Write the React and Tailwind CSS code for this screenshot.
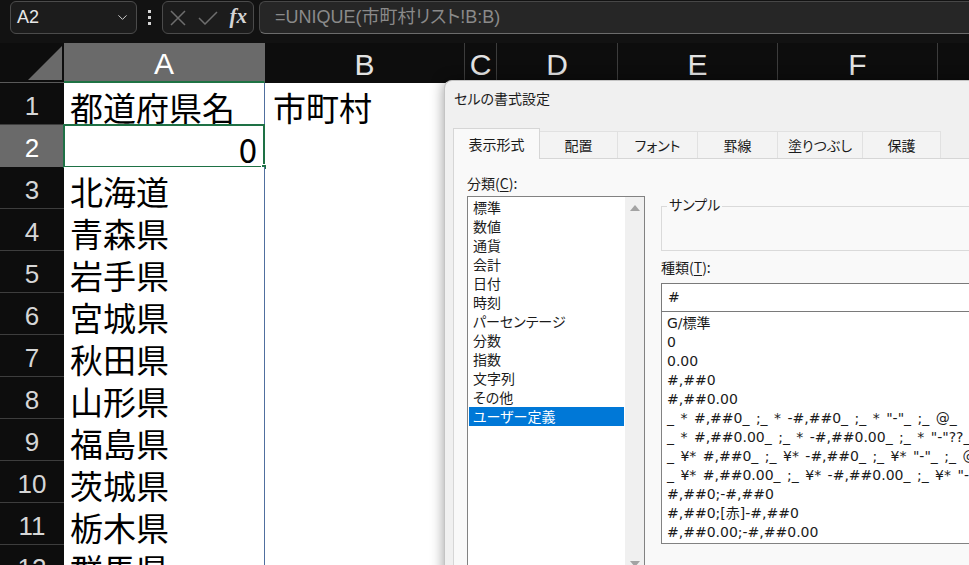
import React from 'react';
import { ChevronDown } from 'lucide-react';

// Column headers of the sheet (widths follow the grid lines in the shot)
const COLS = [
  { label: 'A', w: 'w-[201px]', active: true },
  { label: 'B', w: 'w-[200px]' },
  { label: 'C', w: 'w-[32px]' },
  { label: 'D', w: 'w-[121px]' },
  { label: 'E', w: 'w-[160px]' },
  { label: 'F', w: 'w-[160px]' },
];

const ROWS = [
  { n: 1, a: '都道府県名', b: '市町村' },
  { n: 2, a: '0', active: true },
  { n: 3, a: '北海道' },
  { n: 4, a: '青森県' },
  { n: 5, a: '岩手県' },
  { n: 6, a: '宮城県' },
  { n: 7, a: '秋田県' },
  { n: 8, a: '山形県' },
  { n: 9, a: '福島県' },
  { n: 10, a: '茨城県' },
  { n: 11, a: '栃木県' },
  { n: 12, a: '群馬県' },
];

const TABS = [
  { label: '表示形式', w: 'w-[87px]', active: true },
  { label: '配置', w: 'w-[78px]' },
  { label: 'フォント', w: 'w-[80px]' },
  { label: '罫線', w: 'w-[80px]' },
  { label: '塗りつぶし', w: 'w-[85px]' },
  { label: '保護', w: 'w-[78px]' },
];

const CATEGORIES = [
  '標準', '数値', '通貨', '会計', '日付', '時刻', 'パーセンテージ',
  '分数', '指数', '文字列', 'その他', 'ユーザー定義',
];

const FORMATS = [
  'G/標準',
  '0',
  '0.00',
  '#,##0',
  '#,##0.00',
  '_ * #,##0_ ;_ * -#,##0_ ;_ * "-"_ ;_ @_ ',
  '_ * #,##0.00_ ;_ * -#,##0.00_ ;_ * "-"??_ ;_ @_ ',
  '_ ¥* #,##0_ ;_ ¥* -#,##0_ ;_ ¥* "-"_ ;_ @_ ',
  '_ ¥* #,##0.00_ ;_ ¥* -#,##0.00_ ;_ ¥* "-"??_ ;_ @_ ',
  '#,##0;-#,##0',
  '#,##0;[赤]-#,##0',
  '#,##0.00;-#,##0.00',
];

const FormulaBar = () => (
  <div className="h-[43px] bg-[#121212] flex items-start pt-[1px] pl-[10px]">
    {/* Name box */}
    <div className="w-[127px] h-[33px] rounded-[6px] border border-[#4b4b4b] bg-[#1c1c1c] flex items-center justify-between pl-[6px] pr-[6px]">
      <span className="text-[18px] text-[#e8e8e8] font-['Liberation_Sans',sans-serif]">A2</span>
      <ChevronDown className="w-[15px] h-[15px] text-[#d0d0d0]" strokeWidth={1.6} />
    </div>
    {/* vertical dots */}
    <div className="w-[25px] h-[33px] flex flex-col items-center justify-center gap-[3px]">
      <span className="w-[3px] h-[3px] bg-[#d6d6d6]" />
      <span className="w-[3px] h-[3px] bg-[#d6d6d6]" />
      <span className="w-[3px] h-[3px] bg-[#d6d6d6]" />
    </div>
    {/* cancel / enter / fx */}
    <div className="w-[92px] h-[33px] rounded-[6px] border border-[#4b4b4b] bg-[#1c1c1c] flex items-center justify-between pl-[7px] pr-[6px]">
      <svg width="16" height="16" viewBox="0 0 16 16" className="text-[#6e6e6e]">
        <path d="M1 1L15 15M15 1L1 15" stroke="currentColor" strokeWidth="1.5" fill="none" />
      </svg>
      <svg width="20" height="14" viewBox="0 0 20 14" className="text-[#6e6e6e]">
        <path d="M1 7L7 13L19 1" stroke="currentColor" strokeWidth="1.5" fill="none" />
      </svg>
      <span className="text-[21px] leading-none italic font-bold text-[#d4d4d4] font-['Liberation_Serif',serif] pb-[2px]">fx</span>
    </div>
    {/* formula input */}
    <div className="ml-[5px] flex-1 h-[33px] rounded-l-[6px] border border-r-0 border-[#474747] border-b-[#6c6c6c] bg-[#262626] flex items-center pl-[15px]">
      <span className="text-[18px] text-[#8a8a8a] font-['Liberation_Sans','Noto_Sans_CJK_JP',sans-serif] [font-feature-settings:'palt']">
        =UNIQUE(市町村リスト!B:B)
      </span>
    </div>
  </div>
);

const HeaderRow = () => (
  <div className="h-[40px] flex bg-[#0d0d0d]">
    <div className="w-[64px] h-full border-b border-[#595959] flex items-end justify-end pr-[2px] pb-[2px]">
      <svg width="34" height="34" viewBox="0 0 34 34">
        <polygon points="0,34 34,34 34,0" fill="#6a6a6a" />
      </svg>
    </div>
    {COLS.map((c) => (
      <div
        key={c.label}
        className={`${c.w} h-full flex items-center justify-center pt-[4px] border-r text-[30px] leading-none font-['Liberation_Sans',sans-serif] ${
          c.active
            ? 'bg-[#6a6a6a] text-white border-[#6a6a6a] border-b-2 border-b-[#1f7244]'
            : 'text-[#e2e2e2] border-[#3c3c3c]'
        }`}
      >
        {c.label}
      </div>
    ))}
    <div className="flex-1" />
  </div>
);

const Sheet = () => (
  <div className="flex flex-col">
    {ROWS.map((r) => (
      <div key={r.n} className="h-[42px] flex shrink-0">
        <div
          className={`w-[64px] h-full border-b flex items-center justify-center pt-[5px] text-[26px] leading-none font-['Liberation_Sans',sans-serif] ${
            r.active ? 'bg-[#6a6a6a] text-white border-[#6a6a6a]' : 'bg-[#0d0d0d] text-[#d6d6d6] border-[#3d3d3d]'
          }`}
        >
          {r.n}
        </div>
        <div
          className={`relative w-[201px] h-full bg-white border-r border-[#506f9f] flex pt-[8px] text-[33px] leading-none text-black font-['Noto_Sans_CJK_JP',sans-serif] ${
            r.active ? 'justify-end pr-[7px]' : 'pl-[6px]'
          }`}
        >
          {r.a}
          {r.active && (
            <>
              <div className="absolute -top-[1px] -left-[1px] -right-[1px] -bottom-[1px] border-2 border-[#1e7145]" />
              <div className="absolute -right-[3px] -bottom-[3px] w-[6px] h-[6px] bg-[#1e7145] border border-white" />
            </>
          )}
        </div>
        <div className="flex-1 h-full bg-white pl-[8px] pt-[8px] text-[33px] leading-none text-black font-['Noto_Sans_CJK_JP',sans-serif]">
          {r.b}
        </div>
      </div>
    ))}
  </div>
);

const FormatDialog = () => (
  <div className="absolute left-[444px] top-[80px] w-[540px] h-[500px] bg-[#f0f0f0] rounded-tl-[8px] border-l border-t border-[#c4c4c4] shadow-[0_0_14px_rgba(0,0,0,0.4)] text-[#1b1b1b] font-['Noto_Sans_CJK_JP',sans-serif] [font-feature-settings:'palt']">
    <div className="h-[34px] pl-[9px] flex items-center text-[14px]">セルの書式設定</div>

    {/* Tabs */}
    <div className="ml-[8px] mt-[13px] h-[30px] flex items-end relative z-10">
      {TABS.map((t) =>
        t.active ? (
          <div
            key={t.label}
            className={`${t.w} h-[31px] -mb-[1px] bg-[#f9f9f9] border-l border-t border-r border-[#d6d6d6] flex items-center justify-center text-[14px]`}
          >
            {t.label}
          </div>
        ) : (
          <div
            key={t.label}
            className={`${t.w} h-[27px] bg-[#f3f3f3] border-t border-r border-[#e1e1e1] flex items-center justify-center text-[14px]`}
          >
            {t.label}
          </div>
        )
      )}
    </div>

    {/* Tab page */}
    <div className="ml-[8px] h-[420px] bg-[#f9f9f9] border border-[#d6d6d6] flex gap-[16px] pl-[13px] pt-[15px]">
      {/* Category */}
      <div className="w-[178px] shrink-0 flex flex-col">
        <div className="h-[20px] text-[14px] leading-[18px]">
          分類(<span className="underline underline-offset-2">C</span>):
        </div>
        <div className="mt-[2px] h-[380px] bg-white border border-[#828282] flex">
          <div className="flex-1 pt-[1px] pl-[1px] pr-[1px]">
            {CATEGORIES.map((c, i) => (
              <div
                key={c}
                className={`h-[19px] leading-[18px] pl-[4px] text-[14px] ${
                  i === CATEGORIES.length - 1 ? 'bg-[#0078d7] text-white' : ''
                }`}
              >
                {c}
              </div>
            ))}
          </div>
          <div className="w-[19px] bg-[#f0f0f0] flex flex-col items-center justify-between pt-[8px] pb-[8px]">
            <svg width="10" height="6" viewBox="0 0 10 6">
              <polygon points="0,6 10,6 5,0" fill="#a3a3a3" />
            </svg>
            <svg width="10" height="6" viewBox="0 0 10 6">
              <polygon points="0,0 10,0 5,6" fill="#a3a3a3" />
            </svg>
          </div>
        </div>
      </div>

      {/* Sample + types */}
      <div className="flex-1 min-w-0 flex flex-col">
        <div className="relative mt-[32px] h-[45px] border border-[#dadada]">
          <span className="absolute -top-[13px] left-[5px] px-[2px] bg-[#f9f9f9] text-[14px] leading-[20px]">サンプル</span>
        </div>
        <div className="mt-[8px] h-[19px] text-[14px] leading-[17px]">
          種類(<span className="underline underline-offset-2">T</span>):
        </div>
        <div className="mt-[5px] h-[29px] bg-white border border-[#7a7a7a] flex items-center pl-[6px] text-[14px] font-['DejaVu_Sans','Noto_Sans_CJK_JP',sans-serif]">
          #
        </div>
        <div className="h-[232px] bg-white border-l border-b border-[#828282] pt-[2px] pl-[5px] overflow-hidden text-[14px] [word-spacing:2px] font-['DejaVu_Sans','Noto_Sans_CJK_JP',sans-serif]">
          {FORMATS.map((f) => (
            <div key={f} className="h-[19px] leading-[19px] whitespace-pre">
              {f}
            </div>
          ))}
        </div>
      </div>
    </div>
  </div>
);

export default function App() {
  return (
    <div className="relative w-[969px] h-[565px] overflow-hidden bg-[#0d0d0d]">
      <FormulaBar />
      <HeaderRow />
      <Sheet />
      <FormatDialog />
    </div>
  );
}
